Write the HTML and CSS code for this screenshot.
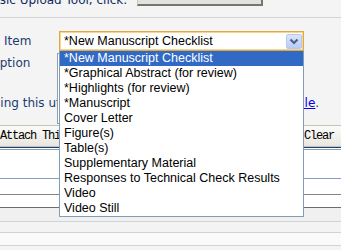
FILE: index.html
```html
<!DOCTYPE html>
<html lang="en">
<head>
	<meta charset="UTF-8">
	<title>Attach Files</title>
	<link rel="stylesheet" href="styles.css">
</head>
<body>
	<div class="top">
		<span class="intro">For the Basic Upload Tool, click:</span>
		<span class="topBtn">Basic Upload</span>
	</div>
	<div class="row rowItem">
		<label class="lbl lblItem">Item</label>
		<div class="select">
			<span>*New Manuscript Checklist</span>
			<span class="arrow">
				<svg width="16" height="15" viewBox="0 0 16 15"><polyline points="4.5,5.5 8,9 11.5,5.5" fill="none" stroke="#4d6185" stroke-width="2.2"/></svg>
			</span>
		</div>
	</div>
	<div class="rowDesc">
		<div class="lblCol">
			<label class="lbl lblDesc">Description</label>
			<p class="note">For assistance using this utility, please refer to this system's Help <a href="#">File</a>.</p>
		</div>
		<textarea class="descInput"></textarea>
	</div>
	<div class="btnRow">
		<span class="btn btnAttach">Attach This File</span>
		<span class="btn btnClear">Clear</span>
	</div>
	<div class="lines">
		<div class="ln ln1"></div>
		<div class="ln ln2"></div>
		<div class="ln ln3"></div>
		<div class="ln ln4"></div>
		<div class="ln ln5"></div>
		<div class="ln ln6"></div>
		<div class="ln ln7"></div>
	</div>
	<ul class="dropList">
		<li class="active">*New Manuscript Checklist</li>
		<li>*Graphical Abstract (for review)</li>
		<li>*Highlights (for review)</li>
		<li>*Manuscript</li>
		<li>Cover Letter</li>
		<li>Figure(s)</li>
		<li>Table(s)</li>
		<li>Supplementary Material</li>
		<li>Responses to Technical Check Results</li>
		<li>Video</li>
		<li>Video Still</li>
	</ul>
</body>
</html>
```

FILE: styles.css
```css
*{
	margin: 0;
	padding: 0;
	box-sizing: border-box;
}
html,body{
	overflow: hidden;
}
body{
	background-color: #f4f4f4;
	font-family: "DejaVu Sans", Verdana, sans-serif;
	font-size: 12px;
	color: #1b3b6f;
	width: 341px;
	height: 250px;
	position: relative;
}
ul{
	list-style: none;
}
.top{
	height: 18px;
	border-bottom: 1px solid #d4d4d4;
	display: flex;
	align-items: flex-start;
	overflow: hidden;
}
.intro{
	margin-top: -7px;
	margin-left: -62px;
	line-height: 15px;
	white-space: nowrap;
	color: #0f2b5c;
}
.topBtn{
	margin-top: -15px;
	margin-left: 10px;
	width: 126px;
	height: 21px;
	flex-shrink: 0;
	background-color: #e4e2dc;
	border: 1px solid #c8c6c0;
	border-right: 2px solid #77756f;
	border-bottom: 2px solid #77756f;
	color: #8a2be2;
	text-align: center;
	line-height: 13px;
}
.row{
	display: flex;
	align-items: center;
	height: 20px;
}
.rowItem{
	margin-top: 13px;
}
.lbl{
	flex-shrink: 0;
	white-space: nowrap;
}
.lblItem{
	margin-left: 4px;
	width: 55px;
}
.select{
	width: 245px;
	height: 20px;
	border: 1px solid #dfa94a;
	box-shadow: inset 0 0 0 1px #f6d68f;
	background-color: #fff;
	display: flex;
	align-items: center;
	justify-content: space-between;
	padding: 0 1px 0 4px;
	font-family: "Liberation Sans", Arial, sans-serif;
	font-size: 12.5px;
	color: #000;
}
.arrow{
	width: 16px;
	height: 15px;
	border: 1px solid #b6c8f2;
	border-radius: 2px;
	background: linear-gradient(#dbe5fc, #b8cbf5);
	display: flex;
}
.arrow svg{
	margin: -1px;
}
.rowDesc{
	margin-top: 2px;
	display: flex;
	align-items: flex-start;
}
.lblCol{
	margin-left: -38px;
	width: 95px;
	flex-shrink: 0;
}
.lblDesc{
	display: block;
	line-height: 20px;
}
.descInput{
	position: relative;
	width: 245px;
	height: 71px;
	border: 1px solid #8d9db3;
	background-color: #fff;
	resize: none;
}
.note{
	margin-top: 23px;
	margin-left: -65px;
	line-height: 15px;
	white-space: nowrap;
}
.note a{
	color: #0000ee;
}
.btnRow{
	margin-top: 1px;
	height: 23px;
	display: flex;
	border-bottom: 1px solid #1f3f6f;
}
.btn{
	height: 22px;
	padding: 0 4px;
	background: linear-gradient(#fbfbf8, #e8e6de);
	border: 1px solid #c4c2ba;
	font-family: "Liberation Mono", "Courier New", monospace;
	font-size: 12px;
	letter-spacing: -1.2px;
	line-height: 20px;
	color: #000;
	white-space: nowrap;
}
.btnAttach{
	margin-left: -5px;
}
.btnClear{
	margin-left: auto;
	margin-right: -8px;
	width: 50px;
}
.ln{
	background-color: #fff;
	border-bottom: 1px solid #d2d2d2;
}
.ln1{
	height: 2px;
	border-bottom-color: #7ea1c3;
}
.ln2{
	height: 29px;
	border-bottom-color: #7ea1c3;
}
.ln3{
	height: 16px;
	border-bottom-color: #858585;
}
.ln4{
	height: 13px;
	border-bottom-color: #6c6c6c;
}
.ln5{
	height: 14px;
	background-color: #f0f0f0;
}
.ln6{
	height: 11px;
	background-color: #f3f3f3;
}
.ln7{
	height: 13px;
	background-color: #fafafa;
}
.dropList{
	position: absolute;
	z-index: 2;
	left: 59px;
	top: 51px;
	width: 245px;
	border: 1px solid #7f9db9;
	border-top: none;
	background-color: #fff;
	font-family: "Liberation Sans", Arial, sans-serif;
	font-size: 12.5px;
	color: #000;
}
.dropList>li{
	height: 15px;
	line-height: 15px;
	padding-left: 4px;
	white-space: nowrap;
}
.dropList>li.active{
	background-color: #316ac5;
	color: #fff;
}
```
